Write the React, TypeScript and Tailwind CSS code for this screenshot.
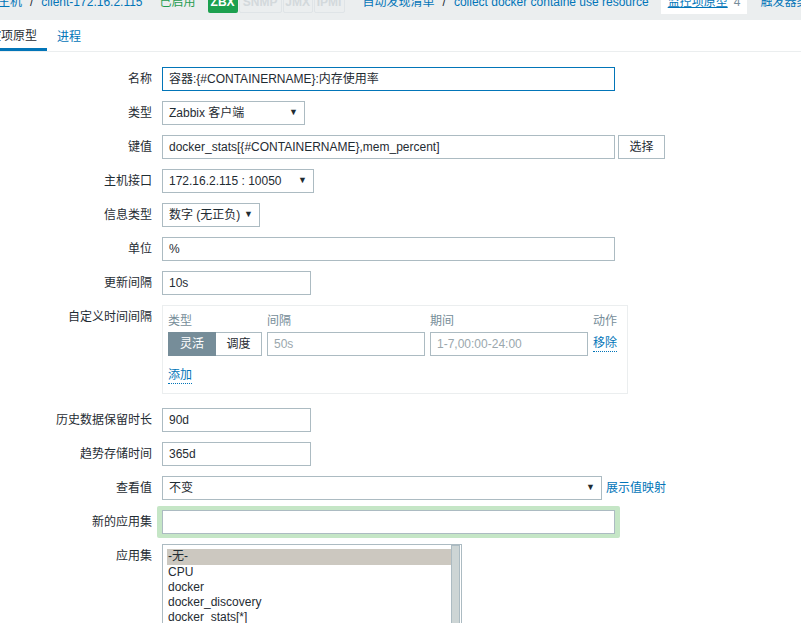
import React from "react";

const font = {
  fontFamily: '"Liberation Sans", Arial, "Noto Sans CJK SC", sans-serif',
};

function Row({
  label,
  children,
  className = "",
}: {
  label: string;
  children: React.ReactNode;
  className?: string;
}) {
  return (
    <div className={`flex items-start ${className}`}>
      <div className="flex h-[24px] w-[152px] shrink-0 items-center justify-end text-[#1f2c33]">
        {label}
      </div>
      <div className="ml-[10px] flex items-start">{children}</div>
    </div>
  );
}

function TextBox({
  value,
  width,
  focused,
  placeholder,
}: {
  value?: string;
  width: string;
  focused?: boolean;
  placeholder?: boolean;
}) {
  return (
    <div
      className={`flex h-[24px] items-center border bg-white px-[6px] ${width} ${
        focused ? "border-[#0275b8]" : "border-[#acbbc2]"
      } ${placeholder ? "text-[#9aa7ad]" : "text-[#1f2c33]"}`}
    >
      {value}
    </div>
  );
}

function Select({ value, width }: { value: string; width: string }) {
  return (
    <div
      className={`flex h-[24px] items-center justify-between border border-[#acbbc2] bg-white pl-[6px] pr-[6px] text-[#1f2c33] ${width}`}
    >
      <span>{value}</span>
      <span className="text-[9px] text-[#1f2c33]">▼</span>
    </div>
  );
}

export default function App() {
  return (
    <div className="h-[623px] w-[801px] overflow-hidden bg-white text-[12px]" style={font}>
      {/* header strip, scrolled so only its lower part shows */}
      <div className="h-[20px] overflow-hidden bg-[#ebeeef]">
        <div className="-ml-[2px] -mt-[13px] flex h-[30px] w-max items-center whitespace-nowrap text-[#0275b8]">
          <span>主机</span>
          <span className="mx-[8px] text-[#1f2c33]">/</span>
          <span>client-172.16.2.115</span>
          <span className="ml-[17px] text-[#1f9c4f]">已启用</span>
          <span className="ml-[12px] flex h-[22px] w-[30px] items-center justify-center rounded-[2px] bg-[#1ca04f] font-bold text-white">
            ZBX
          </span>
          <span className="ml-[1px] flex h-[22px] w-[43px] items-center justify-center rounded-[2px] border border-[#dfe4e7] font-bold text-[#d3d9dc]">
            SNMP
          </span>
          <span className="ml-[1px] flex h-[22px] w-[30px] items-center justify-center rounded-[2px] border border-[#dfe4e7] font-bold text-[#d3d9dc]">
            JMX
          </span>
          <span className="ml-[1px] flex h-[22px] w-[31px] items-center justify-center rounded-[2px] border border-[#dfe4e7] font-bold text-[#d3d9dc]">
            IPMI
          </span>
          <span className="ml-[18px]">自动发现清单</span>
          <span className="mx-[8px] text-[#1f2c33]">/</span>
          <span>collect docker containe use resource</span>
          <span className="ml-[12px] flex h-[24px] items-center bg-white px-[7px]">
            <span className="underline">监控项原型</span>
            <span className="ml-[6px] text-[#768d99]">4</span>
          </span>
          <span className="ml-[13px]">触发器类</span>
        </div>
      </div>

      {/* tabs */}
      <div className="flex h-[32px] items-stretch border-b border-[#ebeeef]">
        <div className="-ml-[33px] flex items-center border-b-[3px] border-[#0275b8] px-[10px] pt-[3px] text-[#1f2c33]">
          监控项原型
        </div>
        <div className="flex items-center px-[10px] pt-[3px] text-[#0275b8]">进程</div>
      </div>

      {/* form */}
      <div className="mt-[15px] flex flex-col gap-[10px]">
        <Row label="名称">
          <TextBox value="容器:{#CONTAINERNAME}:内存使用率" width="w-[453px]" focused />
        </Row>
        <Row label="类型">
          <Select value="Zabbix 客户端" width="w-[143px]" />
        </Row>
        <Row label="键值">
          <TextBox value="docker_stats[{#CONTAINERNAME},mem_percent]" width="w-[453px]" />
          <button className="ml-[3px] h-[24px] w-[47px] border border-[#acbbc2] bg-white text-[#1f2c33]">
            选择
          </button>
        </Row>
        <Row label="主机接口">
          <Select value="172.16.2.115 : 10050" width="w-[152px]" />
        </Row>
        <Row label="信息类型">
          <Select value="数字 (无正负)" width="w-[98px]" />
        </Row>
        <Row label="单位">
          <TextBox value="%" width="w-[453px]" />
        </Row>
        <Row label="更新间隔">
          <TextBox value="10s" width="w-[149px]" />
        </Row>
        <Row label="自定义时间间隔" className="mb-[4px]">
          <div className="h-[89px] w-[466px] border border-[#ebeeef] px-[5px] pt-[4px]">
            <div className="flex h-[22px] items-center text-[#768d99]">
              <span className="w-[99px]">类型</span>
              <span className="w-[163px]">间隔</span>
              <span className="w-[163px]">期间</span>
              <span>动作</span>
            </div>
            <div className="flex items-center">
              <div className="flex h-[24px] w-[94px]">
                <div className="flex w-[48px] items-center justify-center bg-[#768d99] text-white">
                  灵活
                </div>
                <div className="flex w-[46px] items-center justify-center border border-l-0 border-[#acbbc2] text-[#1f2c33]">
                  调度
                </div>
              </div>
              <div className="ml-[5px]">
                <TextBox value="50s" width="w-[158px]" placeholder />
              </div>
              <div className="ml-[5px]">
                <TextBox value="1-7,00:00-24:00" width="w-[158px]" placeholder />
              </div>
              <span className="ml-[5px] border-b border-dotted border-[#0275b8] leading-[15px] text-[#0275b8]">
                移除
              </span>
            </div>
            <div className="mt-[12px] flex">
              <span className="border-b border-dotted border-[#0275b8] leading-[15px] text-[#0275b8]">
                添加
              </span>
            </div>
          </div>
        </Row>
        <Row label="历史数据保留时长">
          <TextBox value="90d" width="w-[149px]" />
        </Row>
        <Row label="趋势存储时间">
          <TextBox value="365d" width="w-[149px]" />
        </Row>
        <Row label="查看值">
          <Select value="不变" width="w-[440px]" />
          <span className="ml-[4px] flex h-[24px] items-center text-[#0275b8]">展示值映射</span>
        </Row>
        <Row label="新的应用集">
          <div className="-my-[4px] -ml-[5px] rounded-[2px] bg-[#c5e6c6] px-[5px] py-[4px]">
            <TextBox width="w-[453px]" />
          </div>
        </Row>
        <Row label="应用集">
          <div className="flex h-[90px] w-[300px] border border-[#acbbc2] bg-white">
            <div className="flex-1 pl-[4px] pt-[4px] leading-[15px] text-[#1f2c33]">
              <div className="h-[16px] bg-[#ccc8c0] pl-[1px]">-无-</div>
              <div className="pl-[1px]">CPU</div>
              <div className="pl-[1px]">docker</div>
              <div className="pl-[1px]">docker_discovery</div>
              <div className="pl-[1px]">docker_stats[*]</div>
            </div>
            <div className="mr-[1px] w-[9px] border border-[#acbbc2] bg-[#cdd5d5]" />
          </div>
        </Row>
      </div>
    </div>
  );
}
